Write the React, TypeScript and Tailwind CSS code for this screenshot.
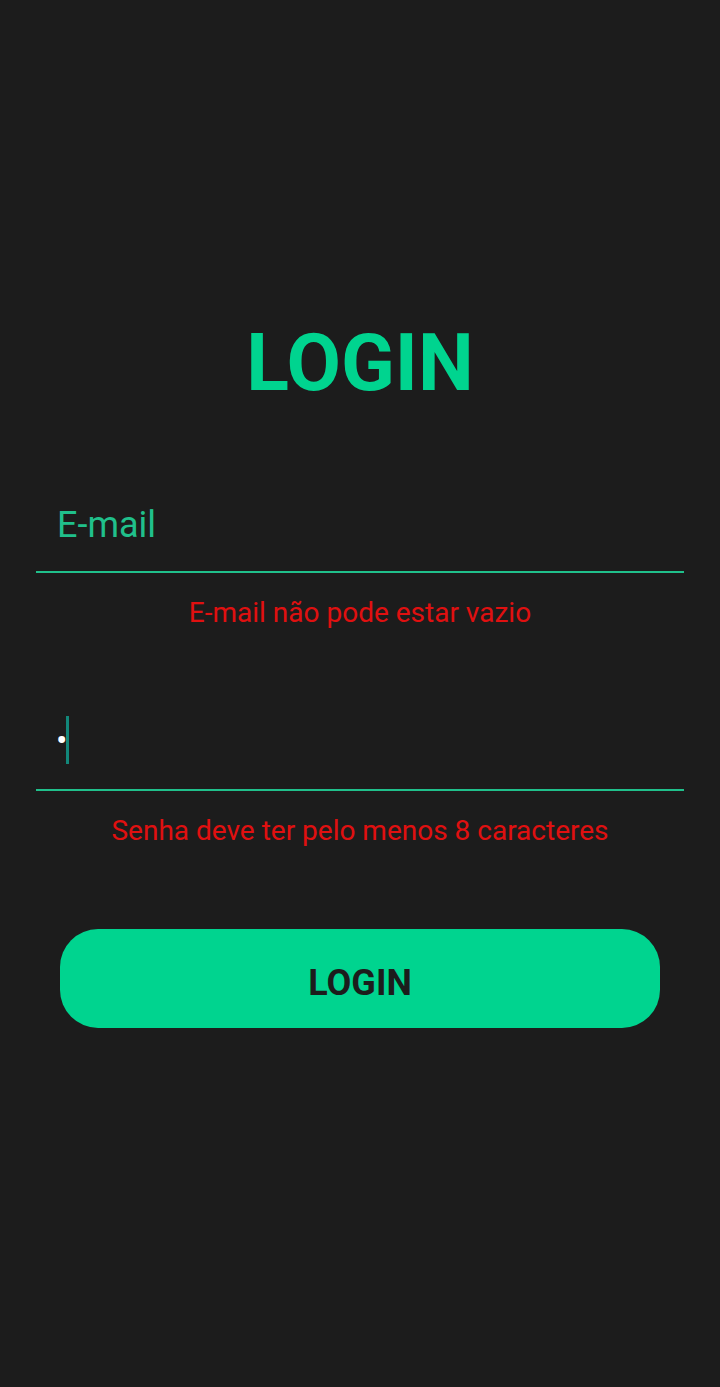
export default function App() {
  return (
    <main
      className="flex min-h-screen flex-col items-center bg-[#1c1c1c]"
      style={{ fontFamily: "Roboto, 'Noto Sans', sans-serif" }}
    >
      <h1 className="mt-[324px] text-[79px] font-bold leading-none text-[#00d48f]">LOGIN</h1>

      <div className="mt-[77px] w-[648px]">
        <div className="border-b-2 border-[#20c08b] pl-[21px] pb-[28px] pt-[27px]">
          <span className="block text-[36px] leading-none text-[#20c08b]">E-mail</span>
        </div>
        <p className="mt-[26px] text-center text-[28px] leading-none text-[#e01010]">
          E-mail não pode estar vazio
        </p>
      </div>

      <div className="mt-[71px] w-[648px]">
        <div className="flex items-center border-b-2 border-[#20c08b] pl-[20px] pb-[25px] pt-[18px]">
          <span className="text-[34px] leading-none text-white">•</span>
          <span className="-ml-[1px] h-[48px] w-[3px] bg-[#12877a]" />
        </div>
        <p className="mt-[26px] text-center text-[28px] leading-none text-[#e01010]">
          Senha deve ter pelo menos 8 caracteres
        </p>
      </div>

      <button
        type="button"
        className="mt-[84px] h-[99px] w-[600px] rounded-[38px] bg-[#00d48f] pt-[8px] text-[36px] font-bold text-[#1c1c1c]"
      >
        LOGIN
      </button>
    </main>
  );
}
